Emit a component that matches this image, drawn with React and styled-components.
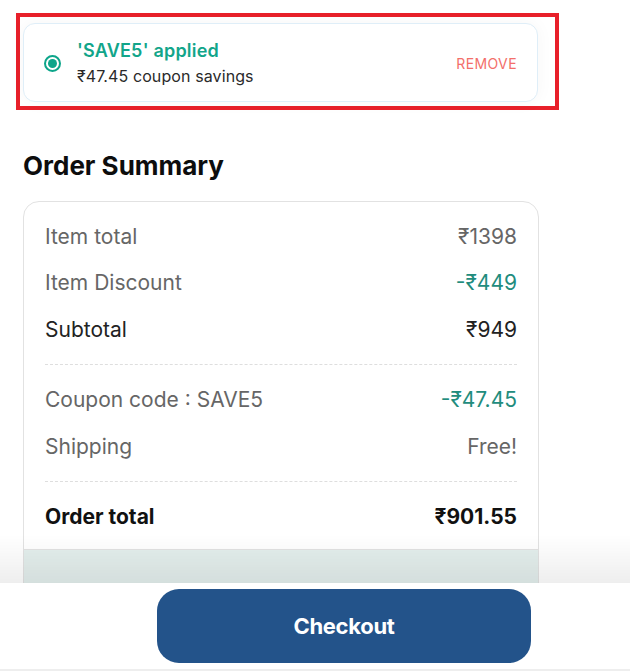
import React from "react";
import styled, { createGlobalStyle } from "styled-components";

const GlobalStyle = createGlobalStyle`
	* {
		box-sizing: border-box;
	}
	body {
		margin: 0;
		background: #ffffff;
		font-family: Inter, "Noto Sans", sans-serif;
		color: #222;
	}
`;

const Page = styled.div`
	padding: 13px 0 140px;
	width: 630px;
`;

// coupon

const Highlight = styled.div`
	margin-left: 16px;
	width: 543px;
	border: 4px solid #e8202a;
	padding: 6px 17px 4px 3px;
`;

const CouponCard = styled.div`
	height: 79px;
	background: #fff;
	border: 1px solid #dfeef8;
	border-radius: 12px;
	box-shadow: 0 0 18px rgba(0, 0, 0, 0.04);
	display: flex;
	align-items: center;
	padding: 0 20px 0 20px;
`;

const Radio = styled.span`
	width: 17px;
	height: 17px;
	border-radius: 50%;
	border: 2px solid #0ca58a;
	display: flex;
	align-items: center;
	justify-content: center;
	margin-right: 16px;
	margin-top: 2px;
	&::after {
		content: "";
		width: 9px;
		height: 9px;
		border-radius: 50%;
		background: #0ca58a;
	}
`;

const CouponText = styled.div`
	flex: 1;
	display: flex;
	flex-direction: column;
	gap: 2px;
`;

const Applied = styled.span`
	font-size: 18px;
	font-weight: 600;
	color: #12a58a;
	line-height: 24px;
	letter-spacing: 0.2px;
`;

const Savings = styled.span`
	font-size: 16px;
	color: #2a2a2a;
	line-height: 22px;
	letter-spacing: 0.1px;
`;

const Remove = styled.button`
	border: none;
	background: none;
	padding: 0;
	font-family: inherit;
	font-size: 14px;
	letter-spacing: 0.4px;
	color: #f36f6a;
	margin-top: 2px;
`;

// summary

const Title = styled.h2`
	margin: 41px 0 0 23px;
	font-size: 26px;
	line-height: 30px;
	font-weight: 700;
	color: #0d0d0d;
`;

const Card = styled.div`
	margin: 20px 0 0 23px;
	width: 516px;
	border: 1px solid #e2e2e2;
	border-radius: 16px;
	overflow: hidden;
	background: #fff;
`;

const Rows = styled.div`
	padding: 11px 21px 9px;
`;

const Row = styled.div`
	height: 46.5px;
	display: flex;
	align-items: center;
	justify-content: space-between;
	font-size: 21px;
	color: ${(p) => (p.strong ? "#111" : p.dark ? "#222" : "#666")};
	font-weight: ${(p) => (p.strong ? 700 : 400)};
`;

const Value = styled.span`
	color: ${(p) => (p.green ? "#228c7d" : "inherit")};
`;

const Divider = styled.div`
	border-top: 1px dashed #dedede;
	margin: 11.5px 0;
`;

const CardFoot = styled.div`
	height: 70px;
	border-top: 1px solid #e2e2e2;
	background: #e4efed;
`;

// bottom bar

const BottomBar = styled.div`
	position: fixed;
	left: 0;
	bottom: 0;
	width: 100%;
	height: 88px;
	background: #fff;
	border-bottom: 2px solid #eeeeee;
	padding: 6px 0 0 157px;
	&::before {
		content: "";
		position: absolute;
		left: 0;
		right: 0;
		bottom: 100%;
		height: 48px;
		background: linear-gradient(rgba(0, 0, 0, 0), rgba(0, 0, 0, 0.065));
		pointer-events: none;
	}
`;

const CheckoutButton = styled.button`
	width: 374px;
	height: 74px;
	border: none;
	border-radius: 22px;
	background: #23538a;
	color: #fff;
	font-family: inherit;
	font-size: 22px;
	font-weight: 700;
	letter-spacing: -0.3px;
`;

const rows1 = [
	{ label: "Item total", value: "₹1398" },
	{ label: "Item Discount", value: "-₹449", green: true },
	{ label: "Subtotal", value: "₹949", dark: true },
];

const rows2 = [
	{ label: "Coupon code : SAVE5", value: "-₹47.45", green: true },
	{ label: "Shipping", value: "Free!" },
];

const App = () => {
	return (
		<Page>
			<GlobalStyle />
			<Highlight>
				<CouponCard>
					<Radio />
					<CouponText>
						<Applied>'SAVE5' applied</Applied>
						<Savings>₹47.45 coupon savings</Savings>
					</CouponText>
					<Remove>REMOVE</Remove>
				</CouponCard>
			</Highlight>

			<Title>Order Summary</Title>
			<Card>
				<Rows>
					{rows1.map((r) => (
						<Row key={r.label} dark={r.dark}>
							<span>{r.label}</span>
							<Value green={r.green}>{r.value}</Value>
						</Row>
					))}
					<Divider />
					{rows2.map((r) => (
						<Row key={r.label}>
							<span>{r.label}</span>
							<Value green={r.green}>{r.value}</Value>
						</Row>
					))}
					<Divider />
					<Row strong>
						<span>Order total</span>
						<span>₹901.55</span>
					</Row>
				</Rows>
				<CardFoot />
			</Card>

			<BottomBar>
				<CheckoutButton>Checkout</CheckoutButton>
			</BottomBar>
		</Page>
	);
};

export default App;
